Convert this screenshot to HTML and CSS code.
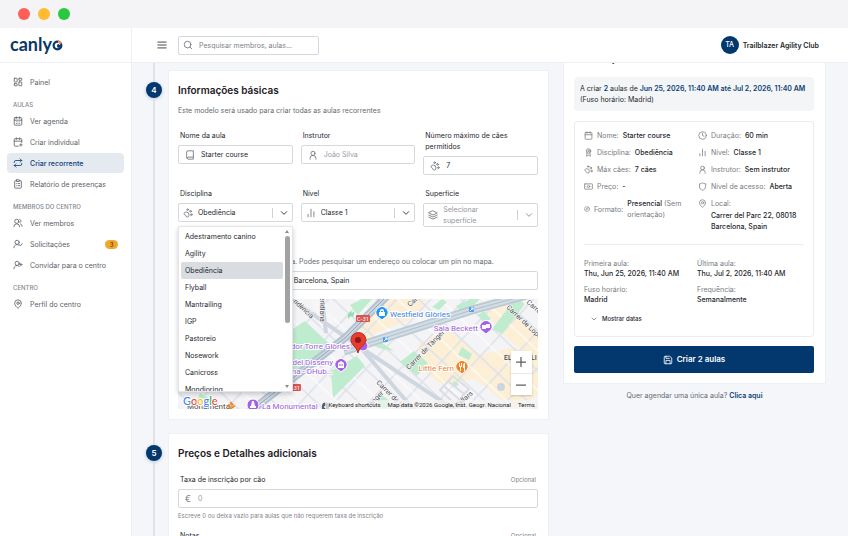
FILE: index.html
```html
<!DOCTYPE html>
<html lang="pt">
<head>
    <title>Canlyo - Criar recorrente</title>
    <meta charset="UTF-8">
    <link rel="stylesheet" href="styles.css">
</head>
<body>
    <svg class="sprite" aria-hidden="true">
        <symbol id="i-grid" viewBox="0 0 24 24"><rect x="3" y="3" width="7" height="9" rx="1"/><rect x="14" y="3" width="7" height="5" rx="1"/><rect x="14" y="12" width="7" height="9" rx="1"/><rect x="3" y="16" width="7" height="5" rx="1"/></symbol>
        <symbol id="i-calendar" viewBox="0 0 24 24"><rect x="3" y="4" width="18" height="18" rx="2"/><path d="M8 2v4M16 2v4M3 10h18"/></symbol>
        <symbol id="i-agenda" viewBox="0 0 24 24"><rect x="3" y="4" width="18" height="18" rx="2"/><path d="M8 2v4M16 2v4M3 10h18M8 14h.01M12 14h.01M16 14h.01M8 18h.01M12 18h.01M16 18h.01"/></symbol>
        <symbol id="i-calplus" viewBox="0 0 24 24"><path d="M21 13V6a2 2 0 0 0-2-2H5a2 2 0 0 0-2 2v14a2 2 0 0 0 2 2h8M8 2v4M16 2v4M3 10h18M16 19h6M19 16v6"/></symbol>
        <symbol id="i-repeat" viewBox="0 0 24 24"><path d="m17 2 4 4-4 4M3 11v-1a4 4 0 0 1 4-4h14M7 22l-4-4 4-4M21 13v1a4 4 0 0 1-4 4H3"/></symbol>
        <symbol id="i-clipboard" viewBox="0 0 24 24"><rect x="8" y="2" width="8" height="4" rx="1"/><path d="M16 4h2a2 2 0 0 1 2 2v14a2 2 0 0 1-2 2H6a2 2 0 0 1-2-2V6a2 2 0 0 1 2-2h2M12 11h4M12 16h4M8 11h.01M8 16h.01"/></symbol>
        <symbol id="i-users" viewBox="0 0 24 24"><path d="M2 21a7 7 0 0 1 14 0M18 14a6 6 0 0 1 4 6M16 3a4.500 4.500 0 0 1 1 8"/><circle cx="9" cy="8" r="5"/></symbol>
        <symbol id="i-usercheck" viewBox="0 0 24 24"><path d="M2 21a8 8 0 0 1 13-6M16 14l2 2 4-5"/><circle cx="10" cy="8" r="5"/></symbol>
        <symbol id="i-userplus" viewBox="0 0 24 24"><path d="M2 21a8 8 0 0 1 13-6M19 8v6M16 11h6"/><circle cx="10" cy="8" r="5"/></symbol>
        <symbol id="i-pin" viewBox="0 0 24 24"><path d="M20 10c0 5-5.500 10.200-7.400 11.800a1 1 0 0 1-1.200 0C9.500 20.200 4 15 4 10a8 8 0 0 1 16 0"/><circle cx="12" cy="10" r="3"/></symbol>
        <symbol id="i-menu" viewBox="0 0 24 24"><path d="M2 5h20M2 12h20M2 19h20"/></symbol>
        <symbol id="i-search" viewBox="0 0 24 24"><circle cx="11" cy="11" r="8"/><path d="m21 21-4-4"/></symbol>
        <symbol id="i-book" viewBox="0 0 24 24"><path d="M4 19V5a3 3 0 0 1 3-3h13v20H7a3 3 0 0 1 0-5h13"/></symbol>
        <symbol id="i-user" viewBox="0 0 24 24"><circle cx="12" cy="8" r="5"/><path d="M5 22v-2a7 7 0 0 1 14 0v2"/></symbol>
        <symbol id="i-paw" viewBox="0 0 24 24"><circle cx="11" cy="4" r="2"/><circle cx="18" cy="8" r="2"/><circle cx="20" cy="16" r="2"/><path d="M9 10a5 5 0 0 1 5 5v3.500a3.500 3.500 0 0 1-6.800 1 5 5 0 0 0-3.700-3.700A3.500 3.500 0 0 1 5.500 10z"/></symbol>
        <symbol id="i-bars" viewBox="0 0 24 24"><path d="M5 21v-6M12 21V3M19 21V9"/></symbol>
        <symbol id="i-layers" viewBox="0 0 24 24"><path d="m12 2 10 5-10 5L2 7zM2 12l10 5 10-5M2 17l10 5 10-5"/></symbol>
        <symbol id="i-down" viewBox="0 0 24 24"><path d="m4 8 8 8 8-8"/></symbol>
        <symbol id="i-award" viewBox="0 0 24 24"><circle cx="12" cy="8" r="6"/><circle cx="12" cy="8" r="2"/><path d="m8 13-1 9 5-3 5 3-1-9"/></symbol>
        <symbol id="i-money" viewBox="0 0 24 24"><rect x="1" y="5" width="22" height="14" rx="2"/><circle cx="12" cy="12" r="3"/><path d="M5 12h.01M19 12h.01"/></symbol>
        <symbol id="i-compass" viewBox="0 0 24 24"><circle cx="12" cy="12" r="10"/><path d="m17 7-3 7-7 3 3-7z"/></symbol>
        <symbol id="i-clock" viewBox="0 0 24 24"><circle cx="12" cy="12" r="10"/><path d="M12 6v6l4 2"/></symbol>
        <symbol id="i-shield" viewBox="0 0 24 24"><path d="M20 13c0 5-3.500 7.500-8 9-4.500-1.500-8-4-8-9V5c3 0 6-1 8-3 2 2 5 3 8 3z"/></symbol>
        <symbol id="i-save" viewBox="0 0 24 24"><path d="M15 3H5a2 2 0 0 0-2 2v14a2 2 0 0 0 2 2h14a2 2 0 0 0 2-2V8zM17 21v-8H7v8M7 3v5h8"/></symbol>
    </svg>

    <div class="titlebar">
        <span class="dot red"></span>
        <span class="dot yellow"></span>
        <span class="dot green"></span>
    </div>

    <div class="app">
        <aside class="sidebar">
            <a class="logo" href="#" aria-label="canlyo">
                <span>canly</span>
                <svg class="logo-mark" viewBox="0 0 20 20">
                    <circle cx="10" cy="10" r="7" fill="none" stroke="#0b3768" stroke-width="4"/>
                    <path d="M10 1a9 9 0 0 1 8 5l-4 2-2-3z" fill="#f58a5b"/>
                    <path d="M9 10l2-3 3 2 3 1-2 4h-5z" fill="#0b3768"/>
                    <circle cx="12" cy="5" r="1" fill="#fff"/>
                </svg>
            </a>
            <nav class="nav">
                <a class="nav-item" href="#"><svg class="icon"><use href="#i-grid"/></svg>Painel</a>
                <h2 class="nav-title">AULAS</h2>
                <a class="nav-item" href="#"><svg class="icon"><use href="#i-agenda"/></svg>Ver agenda</a>
                <a class="nav-item" href="#"><svg class="icon"><use href="#i-calplus"/></svg>Criar individual</a>
                <a class="nav-item active" href="#"><svg class="icon"><use href="#i-repeat"/></svg>Criar recorrente</a>
                <a class="nav-item" href="#"><svg class="icon"><use href="#i-clipboard"/></svg>Relatório de presenças</a>
                <h2 class="nav-title">MEMBROS DO CENTRO</h2>
                <a class="nav-item" href="#"><svg class="icon"><use href="#i-users"/></svg>Ver membros</a>
                <a class="nav-item" href="#"><svg class="icon"><use href="#i-usercheck"/></svg>Solicitações<span class="badge">3</span></a>
                <a class="nav-item" href="#"><svg class="icon"><use href="#i-userplus"/></svg>Convidar para o centro</a>
                <h2 class="nav-title">CENTRO</h2>
                <a class="nav-item" href="#"><svg class="icon"><use href="#i-pin"/></svg>Perfil do centro</a>
            </nav>
        </aside>

        <div class="page">
            <header class="topbar">
                <button class="menu-btn" aria-label="Menu"><svg class="icon"><use href="#i-menu"/></svg></button>
                <div class="field search">
                    <svg class="icon"><use href="#i-search"/></svg>
                    <input type="text" aria-label="Pesquisar" placeholder="Pesquisar membros, aulas...">
                </div>
                <div class="account"><span class="avatar">TA</span>Trailblazer Agility Club</div>
            </header>

            <main class="content">
                <div class="steps">
                    <section class="step">
                        <span class="step-number">4</span>
                        <div class="card">
                            <h3>Informações básicas</h3>
                            <p class="intro">Este modelo será usado para criar todas as aulas recorrentes</p>
                            <div class="form-grid">
                                <div class="form-group">
                                    <label for="nome">Nome da aula</label>
                                    <div class="field">
                                        <svg class="icon"><use href="#i-book"/></svg>
                                        <input type="text" id="nome" value="Starter course">
                                    </div>
                                </div>
                                <div class="form-group">
                                    <label for="instrutor">Instrutor</label>
                                    <div class="field">
                                        <svg class="icon"><use href="#i-user"/></svg>
                                        <input type="text" id="instrutor" placeholder="João Silva">
                                    </div>
                                </div>
                                <div class="form-group">
                                    <label for="max">Número máximo de cães permitidos</label>
                                    <div class="field">
                                        <svg class="icon"><use href="#i-paw"/></svg>
                                        <input type="text" id="max" value="7">
                                    </div>
                                </div>
                                <div class="form-group">
                                    <label for="disciplina">Disciplina</label>
                                    <div class="field select">
                                        <svg class="icon"><use href="#i-paw"/></svg>
                                        <select id="disciplina"><option>Obediência</option></select>
                                        <svg class="icon arrow"><use href="#i-down"/></svg>
                                        <div class="dropdown">
                                            <ul class="options">
                                                <li>Adestramento canino</li>
                                                <li>Agility</li>
                                                <li class="selected">Obediência</li>
                                                <li>Flyball</li>
                                                <li>Mantrailing</li>
                                                <li>IGP</li>
                                                <li>Pastoreio</li>
                                                <li>Nosework</li>
                                                <li>Canicross</li>
                                                <li>Mondioring</li>
                                            </ul>
                                            <div class="scrollbar"><span class="tri up"></span><span class="thumb"></span><span class="tri"></span></div>
                                        </div>
                                    </div>
                                </div>
                                <div class="form-group">
                                    <label for="nivel">Nível</label>
                                    <div class="field select">
                                        <svg class="icon"><use href="#i-bars"/></svg>
                                        <select id="nivel"><option>Classe 1</option></select>
                                        <svg class="icon arrow"><use href="#i-down"/></svg>
                                    </div>
                                </div>
                                <div class="form-group">
                                    <label for="superficie">Superfície</label>
                                    <div class="field select empty">
                                        <svg class="icon"><use href="#i-layers"/></svg>
                                        <select id="superficie"><option>Selecionar superfície</option></select>
                                        <svg class="icon arrow"><use href="#i-down"/></svg>
                                    </div>
                                </div>
                            </div>

                            <div class="form-group location">
                                <label for="local">Localização</label>
                                <p class="hint">Indica a morada onde vai ser a aula. Podes pesquisar um endereço ou colocar um pin no mapa.</p>
                                <div class="field">
                                    <svg class="icon"><use href="#i-pin"/></svg>
                                    <input type="text" id="local" value="Carrer del Parc, 22, 08018 Barcelona, Spain">
                                </div>
                            </div>

                            <div class="map">
                                <svg class="map-canvas" viewBox="0 0 360 110" preserveAspectRatio="xMidYMid slice">
                                    <defs>
                                        <pattern id="streets" width="25" height="29" patternUnits="userSpaceOnUse" patternTransform="rotate(43 180 48)">
                                            <path d="M0 0H25M0 0V29" stroke="#dde1e9" stroke-width="3" fill="none"/>
                                            <path d="M0 15H25" stroke="#fff" stroke-width="1"/>
                                        </pattern>
                                    </defs>
                                    <rect width="360" height="110" fill="#f4f4f7"/>
                                    <g fill="#fcefd6">
                                        <path d="M178 25l25-25h45l-8 18-42 16-10 8zM240 45l30-14 32 25 34-8 24 12v36l-25 14-38-30-34 6-16-14zM302 2h24l34 32v30l-38-30z"/>
                                    </g>
                                    <rect width="360" height="110" fill="url(#streets)"/>
                                    <g fill="#bfeccf">
                                        <path d="M115 30l12-8 30 28-19 18-23 4zM153 72l26-15 8 10-32 32zM222 63l14-11 14 12-11 13zM196 47l8-3 12 8-12-2zM172 6l12-6h10l-14 16zM278 7l14-7h10l-16 16zM314 30l20-26 7-4 6 5-23 30zM284 48l10 7-3 6-11-5zM198 106l6-10 8 6-4 8zM254 8l10-8 5 3-8 8zM22 94l12 7-5 9H16zM300 16l6-4 7 8-7 4zM276 82l5 3-3 3-4-3z"/>
                                    </g>
                                    <path d="M133 0h13l10 22-12 8z" fill="#f6f6f8"/>
                                    <path d="M144-2l4 36M110-2l72 50 55 64M182 48l178 118" fill="none" stroke="#d0d6e0" stroke-width="4"/>
                                    <path d="M262 91l13-14 16 13-14 15zM266 87l15 13M270 82l16 13" fill="none" stroke="#dadde5" stroke-width="2"/>
                                    <circle cx="323" cy="88" r="4" fill="#cdd5e3"/>
                                    <path d="M60 122l55-43 52-40 42-42" fill="none" stroke="#b3c2d0" stroke-width="8"/>
                                    <path d="M60 122l55-43 52-40 42-42" fill="none" stroke="#cdd8e1" stroke-width="4"/>
                                    <path d="M60 122l55-43 52-40 42-42" fill="none" stroke="#8fa4b9" stroke-width="1"/>
                                    <path d="M166 52l34-11 94-30 66-18" fill="none" stroke="#bccad5" stroke-width="9"/>
                                    <path d="M166 52l34-11 94-30 66-18" fill="none" stroke="#d3dde4" stroke-width="5"/>
                                    <path d="M166 52l34-11 94-30 66-18" fill="none" stroke="#aebfcd" stroke-width="1"/>
                                    <path d="M170 15l3-3 1 2 3-2-2 6-2-1-3 3z" fill="#8fe0ab"/>

                                    <g class="street">
                                        <text transform="translate(115 3) rotate(43)">ndència</text>
                                        <text transform="translate(142 -2) rotate(90)">eridiana</text>
                                        <text transform="translate(231 71) rotate(-46)">Carrer de Tànger</text>
                                        <text transform="translate(198 84) rotate(45)">Carrer de la</text>
                                        <text transform="translate(232 8) rotate(-42)">Carrer</text>
                                        <text transform="translate(328 9) rotate(43)">Carrer de Lope de</text>
                                        <text transform="translate(348 4) rotate(40)">Carrer</text>
                                        <text transform="translate(191 110) rotate(-46)">Tànger</text>
                                        <text transform="translate(279 109) rotate(-40)">Pallars</text>
                                    </g>
                                    <g class="district"><text x="326" y="61">EL</text><text x="353" y="61">LI</text></g>

                                    <rect x="178" y="16" width="14" height="7" rx="1" fill="#d9534f"/>
                                    <text class="road" x="185" y="22">C-31</text>
                                    <rect x="110" y="85" width="13" height="7" rx="1" fill="#d9534f"/>
                                    <text class="road" x="116" y="91">C-31</text>
                                    <rect x="205" y="38" width="5" height="5" rx="1" fill="#4a9df0"/><path d="M206 42l3-3M207 39h2v2" stroke="#fff" fill="none"/>
                                    <rect x="291" y="8" width="5" height="5" rx="1" fill="#4a9df0"/><path d="M292 12l3-3M293 9h2v2" stroke="#fff" fill="none"/>

                                    <g class="place">
                                        <text class="blue" x="212" y="18">Westfield Glòries</text>
                                        <text class="purple" x="300" y="32" text-anchor="end">Sala Beckett</text>
                                        <text class="orange" x="276" y="72" text-anchor="end">Little Fern</text>
                                        <text class="purple" x="172" y="50" text-anchor="end">Mirador Torre Glòries</text>
                                        <text class="purple" x="155" y="66" text-anchor="end">Museu del Disseny</text>
                                        <text class="purple" x="155" y="75" text-anchor="end">de Barcelona - DHub...</text>
                                        <text class="purple" x="84" y="110">La Monumental</text>
                                        <text class="dark" x="9" y="110">Monumental</text>
                                    </g>
                                    <g stroke="#fff">
                                        <path d="M204 21l-5-4a6 6 0 1 1 10 0z" fill="#1e96f2"/>
                                        <path d="M308 35l-5-4a6 6 0 1 1 10 0z" fill="#a560e8"/>
                                        <path d="M284 75l-5-4a6 6 0 1 1 10 0z" fill="#f58220"/>
                                        <path d="M163 73l-5-4a6 6 0 1 1 10 0z" fill="#a560e8"/>
                                        <circle cx="75" cy="106" r="6" fill="#a560e8"/>
                                        <circle cx="185" cy="47" r="5" fill="#a560e8"/>
                                    </g>
                                    <g fill="#fff">
                                        <path d="M201 13h6v4h-6zM202 13v-1a2 2 0 0 1 4 0v1h-1v-1h-2v1z"/>
                                        <path d="M304 26h4v4h-4zM308 25h4v4h-4z"/>
                                        <path d="M281 64h1v3h1v-3h1v4h-1v4h-1v-4h-1zM286 64h1v8h-1v-3h-1v-3z"/>
                                        <path d="M160 64l3-2 3 2v5h-6z"/>
                                        <path d="M74 102h2l1 5h1v2h-6v-2h1z"/>
                                    </g>
                                    <path d="M161 66h4" stroke="#a560e8"/>
                                    <path d="M53 104l3 3-3 3-3-3z" fill="none" stroke="#f58220" stroke-width="2" stroke-dasharray="3 1"/>
                                    <path d="M144 110v-3a3 3 0 0 1 7 0v3z" fill="#50616f"/><circle cx="147" cy="108" r="1" fill="#fff"/>
                                    <path d="M180 54c-1-6-7-8-7-13a7 7 0 0 1 15 0c0 5-7 7-8 13z" fill="#ea3b30" stroke="#b52a22"/>
                                    <circle cx="180" cy="41" r="3" fill="#8d1a16"/>
                                    <text class="google" x="5" y="106"><tspan fill="#4285f4">G</tspan><tspan fill="#ea4335">o</tspan><tspan fill="#fbbc05">o</tspan><tspan fill="#4285f4">g</tspan><tspan fill="#34a853">l</tspan><tspan fill="#ea4335">e</tspan></text>
                                </svg>
                                <div class="map-zoom">
                                    <button aria-label="Ampliar"><svg class="icon" viewBox="0 0 24 24"><path d="M12 1v22M1 12h22"/></svg></button>
                                    <button aria-label="Reduzir"><svg class="icon" viewBox="0 0 24 24"><path d="M1 12h22"/></svg></button>
                                </div>
                                <div class="map-credits">
                                    <a href="#">Keyboard shortcuts</a><span>Map data ©2026 Google, Inst. Geogr. Nacional</span><a href="#">Terms</a>
                                </div>
                            </div>
                        </div>
                    </section>

                    <section class="step">
                        <span class="step-number">5</span>
                        <div class="card">
                            <h3>Preços e Detalhes adicionais</h3>
                            <div class="form-group price">
                                <div class="label-row"><label for="taxa">Taxa de inscrição por cão</label><small>Opcional</small></div>
                                <div class="field">
                                    <span class="euro">€</span>
                                    <input type="text" id="taxa" placeholder="0">
                                </div>
                                <p class="help">Escreve 0 ou deixa vazio para aulas que não requerem taxa de inscrição</p>
                            </div>
                            <div class="form-group notes">
                                <div class="label-row"><label for="notas">Notas</label><small>Opcional</small></div>
                                <textarea id="notas" rows="3"></textarea>
                            </div>
                        </div>
                    </section>
                </div>

                <aside class="side">
                    <div class="panel">
                        <h3>Publicação</h3>
                        <p class="notice">A criar <b>2</b> aulas de <b>Jun 25, 2026, 11:40 AM até Jul 2, 2026, 11:40 AM</b> (Fuso horário: Madrid)</p>
                        <div class="summary">
                            <div class="facts">
                                <ul>
                                    <li><svg class="icon"><use href="#i-calendar"/></svg>Nome: <b>Starter course</b></li>
                                    <li><svg class="icon"><use href="#i-award"/></svg>Disciplina: <b>Obediência</b></li>
                                    <li><svg class="icon"><use href="#i-paw"/></svg>Máx cães: <b>7 cães</b></li>
                                    <li><svg class="icon"><use href="#i-money"/></svg>Preço: <b>-</b></li>
                                    <li><svg class="icon small"><use href="#i-compass"/></svg>Formato: <span><b>Presencial</b> (Sem orientação)</span></li>
                                </ul>
                                <ul>
                                    <li><svg class="icon"><use href="#i-clock"/></svg>Duração: <b>60 min</b></li>
                                    <li><svg class="icon"><use href="#i-bars"/></svg>Nível: <b>Classe 1</b></li>
                                    <li><svg class="icon"><use href="#i-user"/></svg>Instrutor: <b>Sem instrutor</b></li>
                                    <li><svg class="icon"><use href="#i-shield"/></svg>Nível de acesso: <b>Aberta</b></li>
                                    <li><svg class="icon"><use href="#i-pin"/></svg>Local:</li>
                                    <li class="address"><b>Carrer del Parc 22, 08018 Barcelona, Spain</b></li>
                                </ul>
                            </div>
                            <dl class="dates">
                                <div><dt>Primeira aula:</dt><dd>Thu, Jun 25, 2026, 11:40 AM</dd></div>
                                <div><dt>Última aula:</dt><dd>Thu, Jul 2, 2026, 11:40 AM</dd></div>
                                <div><dt>Fuso horário:</dt><dd>Madrid</dd></div>
                                <div><dt>Frequência:</dt><dd>Semanalmente</dd></div>
                            </dl>
                            <button class="toggle"><svg class="icon small"><use href="#i-down"/></svg>Mostrar datas</button>
                        </div>
                        <button class="submit"><svg class="icon"><use href="#i-save"/></svg>Criar 2 aulas</button>
                    </div>
                    <p class="single">Quer agendar uma única aula? <a href="#">Clica aqui</a></p>
                </aside>
            </main>
        </div>
    </div>
</body>
</html>
```
FILE: styles.css
```css
* {
    box-sizing: border-box;
}

body {
    font-family: Inter, "Open Sans", sans-serif;
    font-size: 7px;
    line-height: 11px;
    color: #25282d;
    background-color: #f4f6fa;
    margin: 0;
    height: 100vh;
    overflow: hidden;
    display: flex;
    flex-direction: column;
}

h2, h3, p, ul, dl, dd {
    margin: 0;
    padding: 0;
}

ul {
    list-style: none;
}

a {
    color: inherit;
    text-decoration: none;
}

button, input, select, textarea {
    font: inherit;
    color: inherit;
    border: none;
    background: none;
    margin: 0;
    padding: 0;
}

b {
    font-weight: 500;
    color: #25282d;
}

.sprite {
    display: none;
}

.icon {
    width: 10px;
    height: 10px;
    flex: none;
    fill: none;
    stroke: currentColor;
    stroke-width: 2;
    stroke-linecap: round;
    stroke-linejoin: round;
}

.icon.small {
    width: 6px;
    height: 6px;
}

/* window bar */
.titlebar {
    flex: none;
    display: flex;
    align-items: center;
    gap: 8px;
    height: 28px;
    padding-left: 18px;
    background-color: #f4f4f6;
}

.dot {
    width: 12px;
    height: 12px;
    border-radius: 50%;
}

.red { background-color: #ff5f57; }
.yellow { background-color: #febc2e; }
.green { background-color: #28c840; }

.app {
    flex: 1;
    min-height: 0;
    display: flex;
}

/* sidebar */
.sidebar {
    flex: none;
    width: 132px;
    background-color: #fff;
    border-right: 1px solid #eceff3;
}

.logo {
    display: flex;
    align-items: center;
    height: 35px;
    padding: 0 0 2px 10px;
    border-bottom: 1px solid #eceff3;
    font: 700 18px/20px Lato, sans-serif;
    color: #0b3768;
}

.logo-mark {
    width: 11px;
    height: 11px;
    margin-top: 3px;
}

.nav {
    display: flex;
    flex-direction: column;
    gap: 1px;
    padding: 9px 7px;
}

.nav-item {
    display: flex;
    align-items: center;
    gap: 7px;
    height: 20px;
    padding: 0 6px;
    border-radius: 4px;
    color: #5d6269;
}

.nav-item.active {
    background-color: #e4eaf0;
    color: #0d4177;
    font-weight: 500;
}

.nav-title {
    padding: 6px 6px 0;
    font-size: 6px;
    font-weight: 500;
    color: #83878e;
}

.badge {
    margin-left: auto;
    width: 13px;
    border-radius: 5px;
    background-color: #f0a72c;
    color: #3f2c08;
    font-size: 6px;
    line-height: 9px;
    text-align: center;
}

/* top bar */
.page {
    flex: 1;
    min-width: 0;
    display: flex;
    flex-direction: column;
}

.topbar {
    flex: none;
    display: flex;
    align-items: center;
    gap: 11px;
    height: 35px;
    padding: 0 29px 0 25px;
    background-color: #fff;
    border-bottom: 1px solid #eceff3;
}

.menu-btn {
    display: flex;
}

.field {
    display: flex;
    align-items: center;
    gap: 6px;
    min-height: 19px;
    padding: 0 6px;
    border: 1px solid #d5d8dd;
    border-radius: 2px;
    background-color: #fff;
}

.field > .icon {
    color: #6d7178;
}

.field input {
    flex: 1;
    min-width: 0;
}

.field input::placeholder {
    color: #9a9ea5;
    opacity: 1;
}

.search {
    width: 141px;
    padding: 0 4px;
}

.search input::placeholder {
    color: #7d8187;
}

.account {
    display: flex;
    align-items: center;
    gap: 4px;
    margin-left: auto;
    font-weight: 600;
}

.avatar {
    width: 18px;
    border-radius: 50%;
    background-color: #02386e;
    color: #fff;
    font-weight: 500;
    line-height: 18px;
    text-align: center;
}

/* steps */
.content {
    flex: 1;
    min-height: 0;
    overflow: hidden;
    display: grid;
    grid-template-columns: minmax(0, 1.585fr) minmax(0, 1fr);
    gap: 14px;
    padding-right: 22px;
}

.steps {
    display: flex;
    flex-direction: column;
    gap: 13px;
    padding: 7px 0 0 14px;
    background: linear-gradient(#dfe3e9, #dfe3e9) 21px 0 / 2px 100% no-repeat;
}

.step {
    display: flex;
    gap: 6px;
}

.step-number {
    flex: none;
    width: 16px;
    height: 16px;
    margin-top: 12px;
    border-radius: 50%;
    background-color: #02386e;
    box-shadow: 0 1px 3px 1px #d3dae4;
    color: #fff;
    font-size: 8px;
    font-weight: 600;
    line-height: 16px;
    text-align: center;
}

.card {
    flex: 1;
    min-width: 0;
    padding: 13px 10px 10px 9px;
    border: 1px solid #edf0f4;
    border-radius: 2px;
    background-color: #fff;
}

h3 {
    font-size: 10px;
    font-weight: 600;
    line-height: 12px;
    color: #1d2025;
}

.intro {
    margin: 9px 0 14px;
    color: #666a71;
}

.form-grid {
    display: grid;
    grid-template-columns: repeat(3, minmax(0, 1fr));
    gap: 13px 8px;
}

.form-group {
    display: flex;
    flex-direction: column;
    gap: 4px;
}

.form-group label {
    padding: 0 2px;
}

/* selects */
.select {
    position: relative;
    gap: 5px;
    padding: 0 4px;
}

.select select {
    flex: 1;
    min-width: 0;
    appearance: none;
    white-space: normal;
}

.select .arrow {
    width: 16px;
    padding-left: 7px;
    border-left: 1px solid #cdd0d5;
    color: #3f4349;
    stroke-width: 3;
}

.empty select,
.empty .arrow {
    color: #93979d;
}

.dropdown {
    position: absolute;
    z-index: 2;
    top: 22px;
    left: -1px;
    right: -1px;
    display: flex;
    height: 166px;
    overflow: hidden;
    padding-left: 2px;
    background-color: #fff;
    border: 1px solid #e3e5e9;
    border-radius: 2px;
    box-shadow: 0 2px 5px rgba(0, 0, 0, 0.2);
}

.options {
    flex: 1;
    padding-top: 1px;
}

.options li {
    padding: 0 4px;
    border-radius: 2px;
    line-height: 17px;
}

.options .selected {
    background-color: #d9dce1;
}

.scrollbar {
    width: 9px;
    display: flex;
    flex-direction: column;
    align-items: center;
    padding: 3px 0;
}

.thumb {
    width: 5px;
    height: 87px;
    margin: 3px 0 auto;
    border-radius: 3px;
    background-color: #a2a2a2;
}

.tri {
    border: 2px solid transparent;
    border-top: 3px solid #8b8b8b;
    border-bottom: none;
}

.tri.up {
    border-top: none;
    border-bottom: 3px solid #8b8b8b;
}

/* location and map */
.location {
    margin-top: 18px;
    gap: 0;
}

.location .field {
    gap: 8px;
    padding: 0 8px;
}

.hint {
    color: #666a71;
    padding-bottom: 4px;
}

.map {
    position: relative;
    margin-top: 9px;
}

.map-canvas {
    display: block;
    width: 100%;
    height: 110px;
    font-family: Roboto, sans-serif;
}

.street {
    font-size: 7px;
    fill: #45494e;
    stroke: #fff;
    stroke-width: 1px;
    paint-order: stroke;
}

.district {
    font-size: 7px;
    font-weight: 500;
    fill: #4b4f55;
}

.road {
    font-size: 6px;
    fill: #fff;
    text-anchor: middle;
}

.place {
    font-size: 8px;
    stroke: #fff;
    stroke-width: 2px;
    paint-order: stroke;
}

.blue { fill: #3b82e0; }
.purple { fill: #9a5be0; }
.orange { fill: #f08030; }
.dark { fill: #45494e; }

.google {
    font: 500 11px Lato, sans-serif;
    stroke: #fff;
    stroke-width: 2px;
    paint-order: stroke;
}

.map-zoom {
    position: absolute;
    right: 6px;
    bottom: 14px;
    width: 21px;
    background-color: #fff;
    box-shadow: 0 1px 2px rgba(0, 0, 0, 0.2);
}

.map-zoom button {
    display: flex;
    align-items: center;
    justify-content: center;
    width: 100%;
    height: 22px;
    color: #5b5f63;
}

.map-zoom button + button {
    border-top: 1px solid #e8e8e8;
}

.map-zoom .icon {
    stroke-width: 3;
}

.map-credits {
    position: absolute;
    right: 0;
    bottom: 0;
    display: flex;
    gap: 7px;
    padding: 0 3px;
    background-color: rgba(245, 245, 245, 0.7);
    font: 6px/9px Roboto, sans-serif;
    color: #1c1c1c;
}

/* step 5 */
.price {
    margin-top: 15px;
}

.label-row {
    display: flex;
    justify-content: space-between;
    padding-right: 2px;
}

small {
    font-size: 6px;
    color: #7f838a;
}

.euro {
    width: 7px;
    font-size: 9px;
    color: #7f838a;
}

.help {
    margin-top: -2px;
    font-size: 6px;
    color: #7f838a;
}

.notes {
    margin-top: 9px;
}

.notes textarea {
    border: 1px solid #d5d8dd;
    border-radius: 2px;
}

/* right column */
.panel {
    padding: 0 11px 10px 10px;
    border: 1px solid #edf0f4;
    border-top: none;
    background-color: #fff;
}

.panel h3 {
    margin-top: -11px;
}

.notice {
    margin: 13px 0 10px;
    padding: 6px;
    border-radius: 4px;
    background-color: #f3f5f7;
}

.notice b {
    color: #0d3f75;
    font-weight: 600;
}

.summary {
    padding: 8px 9px;
    border: 1px solid #e9ecf0;
    border-radius: 3px;
}

.facts {
    display: grid;
    grid-template-columns: repeat(2, minmax(0, 1fr));
    gap: 8px;
    padding-bottom: 12px;
    border-bottom: 1px solid #e9ecf0;
    color: #777b82;
}

.facts ul {
    display: flex;
    flex-direction: column;
    gap: 6px;
}

.facts li {
    display: flex;
    align-items: center;
    gap: 4px;
}

.facts .icon {
    width: 9px;
    height: 9px;
}

.facts .icon.small {
    width: 6px;
    height: 6px;
}

.facts .address {
    padding-left: 13px;
    margin-top: -5px;
}

.dates {
    display: grid;
    grid-template-columns: repeat(2, minmax(0, 1fr));
    gap: 6px;
    padding: 14px 0 8px;
}

.dates dt {
    color: #777b82;
    line-height: 10px;
}

.dates dd {
    font-weight: 500;
    line-height: 10px;
}

.toggle {
    display: flex;
    align-items: center;
    gap: 5px;
    margin: 0 0 4px 7px;
    font-size: 6px;
    font-weight: 500;
}

.submit {
    display: flex;
    align-items: center;
    justify-content: center;
    gap: 4px;
    width: 100%;
    height: 27px;
    margin-top: 9px;
    border-radius: 2px;
    background-color: #02386e;
    color: #fff;
    font-size: 8px;
    font-weight: 600;
}

.single {
    margin-top: 6px;
    text-align: center;
    color: #666a71;
}

.single a {
    color: #0d4177;
    font-weight: 600;
}
```
